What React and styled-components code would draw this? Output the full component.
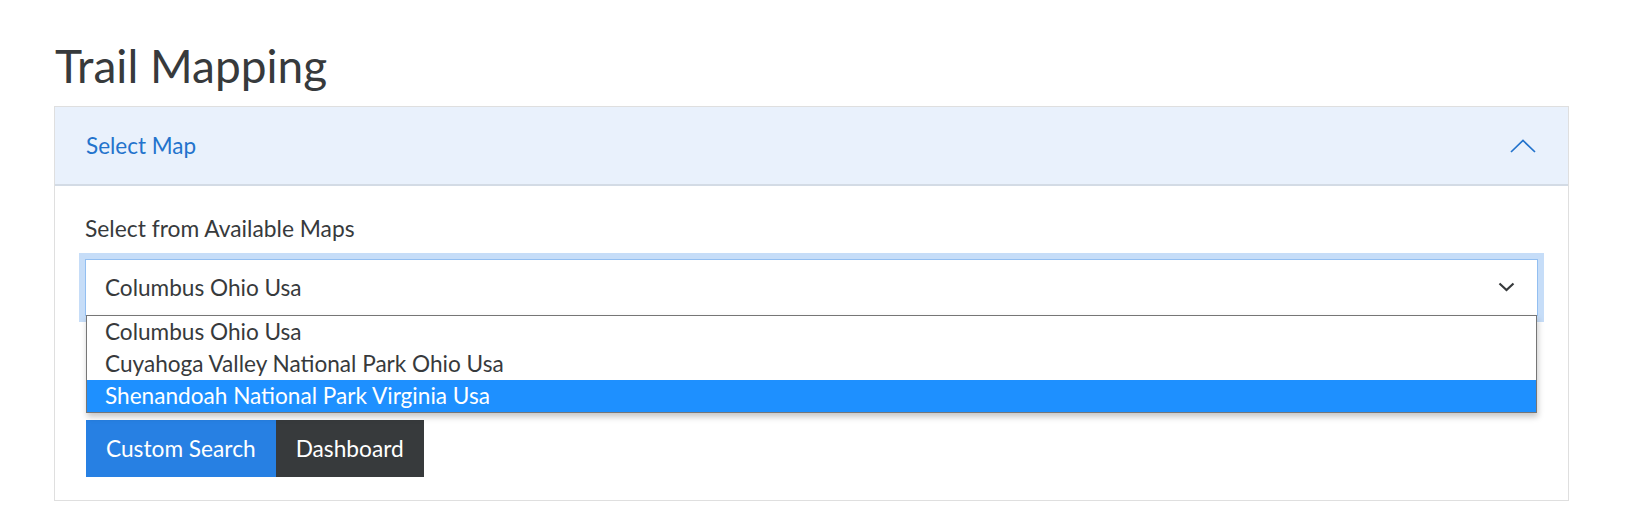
import React, { useState } from "react";
import styled, { createGlobalStyle } from "styled-components";

const GlobalStyle = createGlobalStyle`
  body {
    margin: 0;
    background: #fff;
    font-family: Lato, "Noto Sans", sans-serif;
    color: #373a3c;
  }
`;

const Page = styled.div`
  padding: 0 63px 0 54px;
`;

const Title = styled.h1`
  margin: 38px 0 13px 1px;
  font-size: 46px;
  font-weight: 400;
  line-height: 1.2;
  color: #373a3c;
`;

const Card = styled.div`
  border: 1px solid #dfdfdf;
`;

const Header = styled.button`
  display: flex;
  align-items: center;
  justify-content: space-between;
  width: 100%;
  height: 79px;
  padding: 0 32px 0 31px;
  border: none;
  border-bottom: 2px solid #d3dbe5;
  background: #e9f1fc;
  color: #2373cc;
  font-family: inherit;
  font-size: 22.5px;
  cursor: pointer;
`;

const Body = styled.div`
  position: relative;
  padding: 25px 30px 23px 30px;
`;

const Label = styled.div`
  font-size: 22.8px;
  line-height: 34.5px;
  margin-bottom: 13px;
`;

const SelectBox = styled.div`
  position: relative;
  display: flex;
  align-items: center;
  justify-content: space-between;
  height: 57px;
  box-sizing: border-box;
  padding: 0 22px 0 19px;
  border: 1px solid #93bff1;
  box-shadow: 0 0 0 6px #c6ddf8;
  font-size: 22.6px;
  background: #fff;
`;

const Popup = styled.ul`
  position: absolute;
  top: 55px;
  left: 0;
  right: 0;
  margin: 0;
  padding: 0;
  list-style: none;
  background: #fff;
  border: 1px solid #767676;
  box-shadow: 1px 4px 6px rgba(0, 0, 0, 0.22);
  z-index: 2;
`;

const Option = styled.li`
  height: 32px;
  line-height: 32px;
  padding-left: 18px;
  font-size: 22.6px;
  color: ${(p) => (p.$active ? "#fff" : "#373a3c")};
  background: ${(p) => (p.$active ? "#1e90ff" : "#fff")};
`;

const Buttons = styled.div`
  display: flex;
  margin-top: 104px;
  margin-left: 1px;
`;

const Button = styled.button`
  height: 57px;
  padding: 0 20px;
  border: none;
  border-radius: 0;
  font-family: inherit;
  font-size: 22.7px;
  color: #fff;
  background: ${(p) => (p.$variant === "dark" ? "#373a3c" : "#2780e3")};
  cursor: pointer;
`;

const maps = [
  "Columbus Ohio Usa",
  "Cuyahoga Valley National Park Ohio Usa",
  "Shenandoah National Park Virginia Usa",
];

export default function App() {
  const [hover] = useState(2);
  return (
    <Page>
      <GlobalStyle />
      <Title>Trail Mapping</Title>
      <Card>
        <Header>
          <span>Select Map</span>
          <svg width="26" height="14" viewBox="0 0 26 14">
            <polyline points="1,13 13,1.5 25,13" fill="none" stroke="#2373cc" strokeWidth="1.7" />
          </svg>
        </Header>
        <Body>
          <Label>Select from Available Maps</Label>
          <SelectBox>
            <span>{maps[0]}</span>
            <svg width="17" height="10" viewBox="0 0 17 10">
              <polyline points="1.5,1.5 8.5,8 15.5,1.5" fill="none" stroke="#373a3c" strokeWidth="2.2" />
            </svg>
            <Popup>
              {maps.map((m, i) => (
                <Option key={m} $active={i === hover}>
                  {m}
                </Option>
              ))}
            </Popup>
          </SelectBox>
          <Buttons>
            <Button>Custom Search</Button>
            <Button $variant="dark">Dashboard</Button>
          </Buttons>
        </Body>
      </Card>
    </Page>
  );
}
